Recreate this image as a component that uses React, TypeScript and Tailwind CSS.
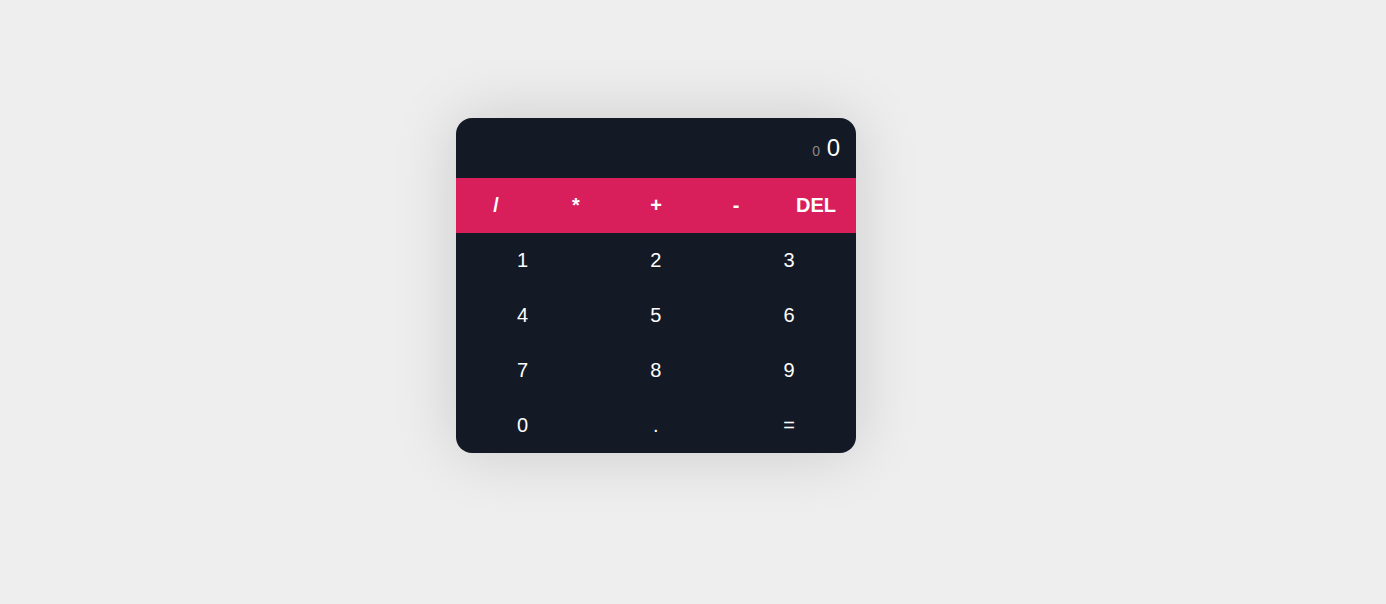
const ops = ["/", "*", "+", "-", "DEL"];
const digits = ["1", "2", "3", "4", "5", "6", "7", "8", "9", "0", ".", "="];

export default function App() {
  return (
    <div
      className="min-h-screen bg-[#eeeeee] pt-[118px] pl-[456px]"
      style={{ fontFamily: '"Liberation Sans", Arial, sans-serif' }}
    >
      <div className="w-[400px] overflow-hidden rounded-2xl shadow-[0_0_64px_rgba(0,0,0,0.15)]">
        <div className="bg-[#131a26] p-4 text-right text-2xl leading-[28px] text-white">
          <span className="text-sm text-[#888888]">0</span> 0
        </div>
        <div className="flex bg-[#d81e5b]">
          {ops.map((op) => (
            <button
              key={op}
              className="flex-1 p-4 text-xl leading-[23px] font-bold text-white"
            >
              {op}
            </button>
          ))}
        </div>
        <div className="flex flex-wrap">
          {digits.map((d) => (
            <button
              key={d}
              className="w-[33.3%] bg-[#131a26] p-4 text-xl leading-[23px] text-white"
            >
              {d}
            </button>
          ))}
        </div>
      </div>
    </div>
  );
}
